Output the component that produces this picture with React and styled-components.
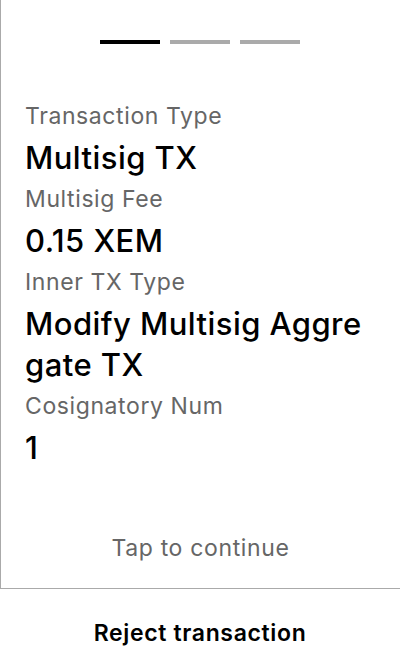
import React from "react";
import styled, { createGlobalStyle } from "styled-components";

const Global = createGlobalStyle`
  html, body { margin: 0; padding: 0; background: #fff; }
  body { font-family: Inter, "Noto Sans", sans-serif; }
`;

const Screen = styled.div`
  width: 400px;
  height: 672px;
  box-sizing: border-box;
  border-left: 1px solid #aaaaaa;
  display: flex;
  flex-direction: column;
  background: #fff;
`;

const Progress = styled.div`
  display: flex;
  justify-content: center;
  gap: 10px;
  padding-top: 40px;
  margin-left: -1px;
`;

const Bar = styled.div`
  width: 60px;
  height: 4px;
  background: ${(p) => (p.$active ? "#000" : "#aaaaaa")};
`;

const Fields = styled.div`
  padding: 51px 30px 0 24px;
  display: flex;
  flex-direction: column;
`;

const Label = styled.div`
  font-size: 23px;
  line-height: 28px;
  letter-spacing: 0.6px;
  margin: 7px 0;
  color: #666666;
`;

const Value = styled.div`
  font-size: 31px;
  line-height: 41px;
  font-weight: 450;
  letter-spacing: 0.45px;
  color: #000;
  word-break: break-all;
`;

const Spacer = styled.div`
  flex: 1;
`;

const Tap = styled.div`
  text-align: center;
  font-size: 23px;
  line-height: 28px;
  letter-spacing: 0.65px;
  color: #666666;
  padding-bottom: 26px;
`;

const Reject = styled.button`
  height: 84px;
  border: none;
  border-top: 1px solid #aaaaaa;
  margin-left: -1px;
  background: #fff;
  font-family: inherit;
  font-size: 23px;
  font-weight: 600;
  letter-spacing: 0.65px;
  color: #000;
  padding: 4px 0 0 0;
`;

const fields = [
  ["Transaction Type", "Multisig TX"],
  ["Multisig Fee", "0.15 XEM"],
  ["Inner TX Type", "Modify Multisig Aggregate TX"],
  ["Cosignatory Num", "1"],
];

export default function App() {
  return (
    <>
      <Global />
      <Screen>
        <Progress>
          <Bar $active />
          <Bar />
          <Bar />
        </Progress>
        <Fields>
          {fields.map(([l, v]) => (
            <React.Fragment key={l}>
              <Label>{l}</Label>
              <Value>{v}</Value>
            </React.Fragment>
          ))}
        </Fields>
        <Spacer />
        <Tap>Tap to continue</Tap>
        <Reject>Reject transaction</Reject>
      </Screen>
    </>
  );
}
